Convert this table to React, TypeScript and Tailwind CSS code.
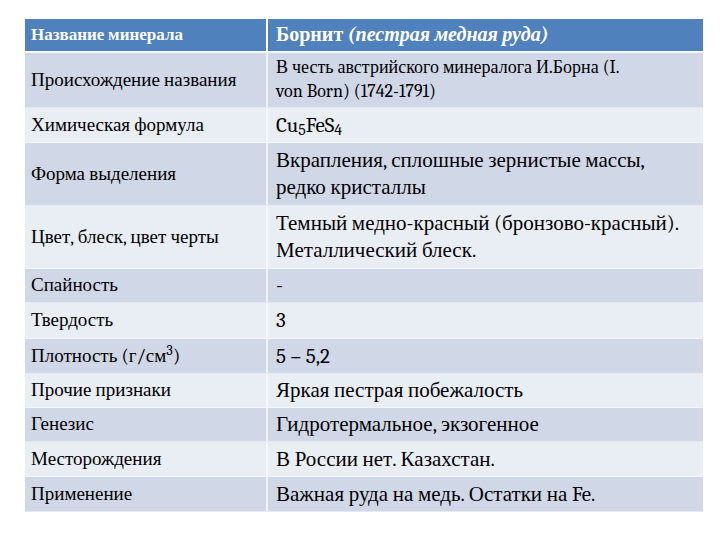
import React from "react";

type Row = { left: React.ReactNode; right: React.ReactNode; h: string; rightSize?: string };

const rows: Row[] = [
  {
    left: "Происхождение названия",
    right: (
      <>
        В честь австрийского минералога И.Борна (I.
        <br />
        von Born) (1742-1791)
      </>
    ),
    h: "h-[55px]",
    rightSize: "text-[18px] leading-[24px]",
  },
  {
    left: "Химическая формула",
    right: (
      <>
        Cu<sub>5</sub>FeS<sub>4</sub>
      </>
    ),
    h: "h-[35px]",
  },
  {
    left: "Форма выделения",
    right: (
      <>
        Вкрапления, сплошные зернистые массы,
        <br />
        редко кристаллы
      </>
    ),
    h: "h-[63px]",
  },
  {
    left: "Цвет, блеск, цвет черты",
    right: (
      <>
        Темный медно-красный (бронзово-красный).
        <br />
        Металлический блеск.
      </>
    ),
    h: "h-[63px]",
  },
  { left: "Спайность", right: "-", h: "h-[34px]" },
  { left: "Твердость", right: "3", h: "h-[36px]" },
  {
    left: (
      <>
        Плотность (г/см<sup>3</sup>)
      </>
    ),
    right: "5 – 5,2",
    h: "h-[35px]",
  },
  { left: "Прочие признаки", right: "Яркая пестрая побежалость", h: "h-[34px]" },
  { left: "Генезис", right: "Гидротермальное, экзогенное", h: "h-[34px]" },
  { left: "Месторождения", right: "В России нет. Казахстан.", h: "h-[35px]" },
  { left: "Применение", right: "Важная руда на медь. Остатки на Fe.", h: "h-[35px]" },
];

export default function App() {
  return (
    <div className="font-serif">
      <div className="font-serif w-[720px] h-[540px] bg-white pt-[19px] pl-[25px] text-black">
        <div className="w-[678px] flex flex-col">
          <div className="flex h-[34px] bg-[#4f81bd] text-white border-b-2 border-white">
            <div className="w-[243px] flex items-center pl-[6px] border-r-2 border-white">
              <span className="font-serif text-[17px] font-bold whitespace-nowrap">Название минерала</span>
            </div>
            <div className="flex-1 flex items-center pl-[8px]">
              <span className="font-serif text-[20px] font-bold whitespace-nowrap">
                Борнит <span className="font-serif italic">(пестрая медная руда)</span>
              </span>
            </div>
          </div>
          {rows.map((r, i) => (
            <div
              key={i}
              className={`flex ${r.h} border-b ${i % 2 === 0 ? "bg-[#d0d8e8] border-[#e4e9f2]" : "bg-[#e9edf4] border-[#f4f6fa]"}`}
            >
              <div
                className={`w-[243px] flex items-center pl-[6px] border-r-2 ${i % 2 === 0 ? "border-[#f0f3f8]" : "border-[#f8f9fc]"}`}
              >
                <span className="font-serif text-[19px] whitespace-nowrap">{r.left}</span>
              </div>
              <div className="flex-1 flex items-center pl-[8px] overflow-hidden">
                <span className={`font-serif whitespace-nowrap ${r.rightSize ?? "text-[21px] leading-[27px]"}`}>
                  {r.right}
                </span>
              </div>
            </div>
          ))}
        </div>
      </div>
    </div>
  );
}
